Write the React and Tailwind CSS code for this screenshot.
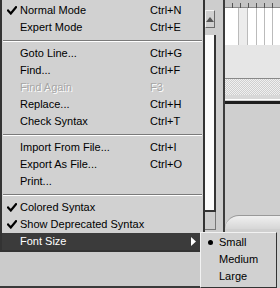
import React from "react";

const Check = () => (
  <svg width="10" height="9" viewBox="0 0 10 9" className="block">
    <path d="M1 4.5 L3.8 7.5 L9 1.2" stroke="#000" strokeWidth="2.2" fill="none" strokeLinecap="square" />
  </svg>
);

function Item({ label, shortcut, checked, disabled, highlight, arrow }) {
  return (
    <div
      className={
        "relative flex h-[17px] items-center " +
        (highlight ? "bg-[#3b3b3b] text-white" : disabled ? "text-[#a6a6a6]" : "text-black")
      }
    >
      <div className="flex w-[18px] justify-center pl-[1px]">{checked ? <Check /> : null}</div>
      <div className={"flex-1 " + (disabled ? "[text-shadow:1px_1px_0_#fff]" : "")}>{label}</div>
      <div className={"w-[53px] " + (disabled ? "[text-shadow:1px_1px_0_#fff]" : "")}>{shortcut}</div>
      {arrow ? (
        <svg width="5" height="9" viewBox="0 0 5 9" className="absolute right-[7px] top-[4px]">
          <path d="M0 0 L5 4.5 L0 9 Z" fill="#fff" />
        </svg>
      ) : null}
    </div>
  );
}

const Sep = () => (
  <div className="flex h-[9px] flex-col justify-center px-[1px]">
    <div className="h-px bg-[#7a7a7a]" />
    <div className="h-px bg-white" />
  </div>
);

export default function App() {
  return (
    <div
      className="relative h-[288px] w-[280px] overflow-hidden bg-[#c8c8c8] text-[11px] leading-none"
      style={{ fontFamily: '"Liberation Sans", Arial, sans-serif' }}
    >
      {/* underlying window */}
      <div className="flex h-full">
        <div className="flex h-full w-[204px] flex-col">
          <div className="h-[252px]" />
          <div className="flex-1 bg-[#cbcbcb]" />
          <div className="h-[2px] bg-[#3a3a3a]" />
        </div>
        <div className="relative h-full w-[21px] bg-[#cdcdcd]">
          <div className="ml-[1px] mt-[10px] flex h-[18px] w-[10px] items-center justify-center border border-[#f4f4f4] border-b-[#6a6a6a] border-r-[#6a6a6a] bg-[#d0d0d0]">
            <svg width="8" height="5" viewBox="0 0 8 5">
              <path d="M4 0 L8 5 L0 5 Z" fill="#555" />
            </svg>
          </div>
          <div className="ml-[1px] mt-[7px] h-[177px] w-[11px] border-r-2 border-b-2 border-[#333] bg-[#fbfbfb]" />
          <div className="ml-[1px] h-[18px] w-[11px] border-r border-b border-[#777]" />
          <div className="absolute right-0 top-0 h-full w-[2px] bg-[#3c3c3c]" />
        </div>
        <div className="flex h-full flex-1 flex-col bg-[#cfcfcf]">
          <div className="flex h-[8px] justify-around border-b border-[#888] bg-[#c4c4c4] px-[4px]">
            {[0, 1, 2, 3, 4, 5].map((i) => (
              <div key={i} className="mt-[3px] h-[5px] w-px bg-[#555]" />
            ))}
          </div>
          <div className="flex h-[37px] bg-white">
            <div className="w-[14px] border-r border-[#bbb]" />
            <div className="w-[9px] border-r border-[#bbb] bg-[#ececec]" />
            <div className="w-[9px] border-r border-[#bbb]" />
            <div className="w-[8px] border-r border-[#bbb]" />
            <div className="w-[8px] border-r border-[#bbb]" />
            <div className="flex-1" />
          </div>
          <div className="h-[34px] border-b border-[#888] bg-[#e6e6e6]" />
          <div className="h-[16px] bg-[#dedede] [background-image:repeating-conic-gradient(#cfcfcf_0_25%,#f0f0f0_0_50%)] [background-size:2px_2px]" />
          <div className="h-[4px] bg-[#d8d8d8]" />
          <div className="h-px bg-white" />
          <div className="h-px bg-[#cfcfcf]" />
          <div className="h-[3px] bg-[#1e1e1e]" />
          <div className="h-[111px] bg-[#cfcfcf]" />
          <div className="h-[14px] rounded-tl-[30px] border-t border-[#999] bg-gradient-to-b from-[#f0f0f0] to-[#d6d6d6]" />
          <div className="flex-1 bg-[#d0d0d0]" />
        </div>
      </div>

      {/* main menu */}
      <div className="absolute left-0 top-0 flex h-[252px] w-[205px] flex-col border-l-2 border-r-2 border-b-2 border-[#333] bg-[#d1d1d1] pt-[2px]">
        <Item label="Normal Mode" shortcut="Ctrl+N" checked />
        <Item label="Expert Mode" shortcut="Ctrl+E" />
        <Sep />
        <Item label="Goto Line..." shortcut="Ctrl+G" />
        <Item label="Find..." shortcut="Ctrl+F" />
        <Item label="Find Again" shortcut="F3" disabled />
        <Item label="Replace..." shortcut="Ctrl+H" />
        <Item label="Check Syntax" shortcut="Ctrl+T" />
        <Sep />
        <Item label="Import From File..." shortcut="Ctrl+I" />
        <Item label="Export As File..." shortcut="Ctrl+O" />
        <Item label="Print..." />
        <Sep />
        <Item label="Colored Syntax" checked />
        <Item label="Show Deprecated Syntax" checked />
        <Item label="Font Size" highlight arrow />
      </div>

      {/* submenu */}
      <div className="absolute left-[200px] top-[232px] flex h-[56px] w-[77px] flex-col border border-[#f2f2f2] border-b-[#333] border-r-[#333] bg-[#d1d1d1] pt-[1px]">
        {["Small", "Medium", "Large"].map((s, i) => (
          <div key={s} className="flex h-[17px] items-center">
            <div className="flex w-[18px] justify-center">
              {i === 0 ? <div className="h-[5px] w-[5px] rounded-full bg-black" /> : null}
            </div>
            <div>{s}</div>
          </div>
        ))}
      </div>
    </div>
  );
}
